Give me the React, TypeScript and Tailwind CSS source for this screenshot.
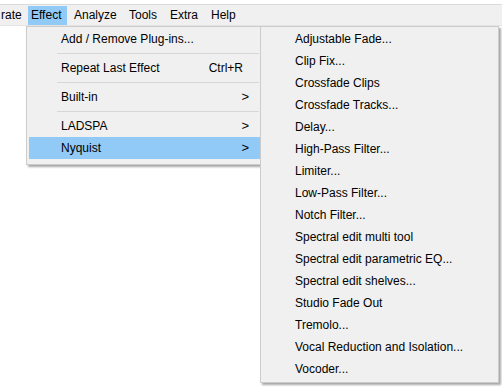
import React from "react";

const BAR = [
  { l: "rate", w: "w-[28px]", p: "pl-[1px]" },
  { l: "Effect", w: "w-[39px]", p: "pl-[3px]", on: true },
  { l: "Analyze", w: "w-[55px]", p: "pl-[7px]" },
  { l: "Tools", w: "w-[41px]", p: "pl-[7px]" },
  { l: "Extra", w: "w-[41px]", p: "pl-[7px]" },
  { l: "Help", w: "w-[41px]", p: "pl-[7px]" },
];

const NYQUIST = [
  "Adjustable Fade...",
  "Clip Fix...",
  "Crossfade Clips",
  "Crossfade Tracks...",
  "Delay...",
  "High-Pass Filter...",
  "Limiter...",
  "Low-Pass Filter...",
  "Notch Filter...",
  "Spectral edit multi tool",
  "Spectral edit parametric EQ...",
  "Spectral edit shelves...",
  "Studio Fade Out",
  "Tremolo...",
  "Vocal Reduction and Isolation...",
  "Vocoder...",
];

function Sep() {
  return (
    <div className="flex h-[7px] items-center pl-[30px] pr-[3px]">
      <div className="h-px w-full bg-[#d7d7d7]" />
    </div>
  );
}

function Item({
  label,
  right,
  arrow,
  on,
}: {
  label: string;
  right?: string;
  arrow?: boolean;
  on?: boolean;
}) {
  return (
    <div
      className={[
        "mx-[2px] flex h-[22px] items-center justify-between pl-[32px] pr-[11px]",
        on ? "bg-[#91c9f7]" : "",
      ].join(" ")}
    >
      <span>{label}</span>
      {right && <span className="mr-[6px]">{right}</span>}
      {arrow && <span className="text-[13px]">&gt;</span>}
    </div>
  );
}

export default function App() {
  return (
    <div className="relative h-[389px] w-[502px] overflow-hidden bg-white font-['Liberation_Sans',Arial,sans-serif] text-[12px] text-black">
      <div className="h-[5px] border-b border-[#dadada] bg-white" />
      <div className="flex h-[21px] items-center border-b border-[#e3e3e3] bg-[#f0f0f0]">
        {BAR.map((b) => (
          <div
            key={b.l}
            className={[
              "flex h-[19px] items-center",
              b.w,
              b.p,
              b.on ? "bg-[#91c9f7]" : "",
            ].join(" ")}
          >
            {b.l}
          </div>
        ))}
      </div>

      {/* Effect menu */}
      <div className="absolute left-[26px] top-[26px] w-[237px] border border-[#cccccc] bg-[#f0f0f0] pb-[5px] pt-[1px] shadow-[2px_2px_2px_rgba(0,0,0,0.35)]">
        <Item label="Add / Remove Plug-ins..." />
        <Sep />
        <Item label="Repeat Last Effect" right="Ctrl+R" />
        <Sep />
        <Item label="Built-in" arrow />
        <Sep />
        <Item label="LADSPA" arrow />
        <Item label="Nyquist" arrow on />
      </div>

      {/* Nyquist submenu */}
      <div className="absolute left-[260px] top-[26px] w-[239px] border border-[#cccccc] bg-[#f0f0f0] pb-[2px] pt-[1px] shadow-[2px_2px_2px_rgba(0,0,0,0.35)]">
        {NYQUIST.map((n) => (
          <div key={n} className="flex h-[22px] items-center pl-[34px]">
            {n}
          </div>
        ))}
      </div>
    </div>
  );
}
